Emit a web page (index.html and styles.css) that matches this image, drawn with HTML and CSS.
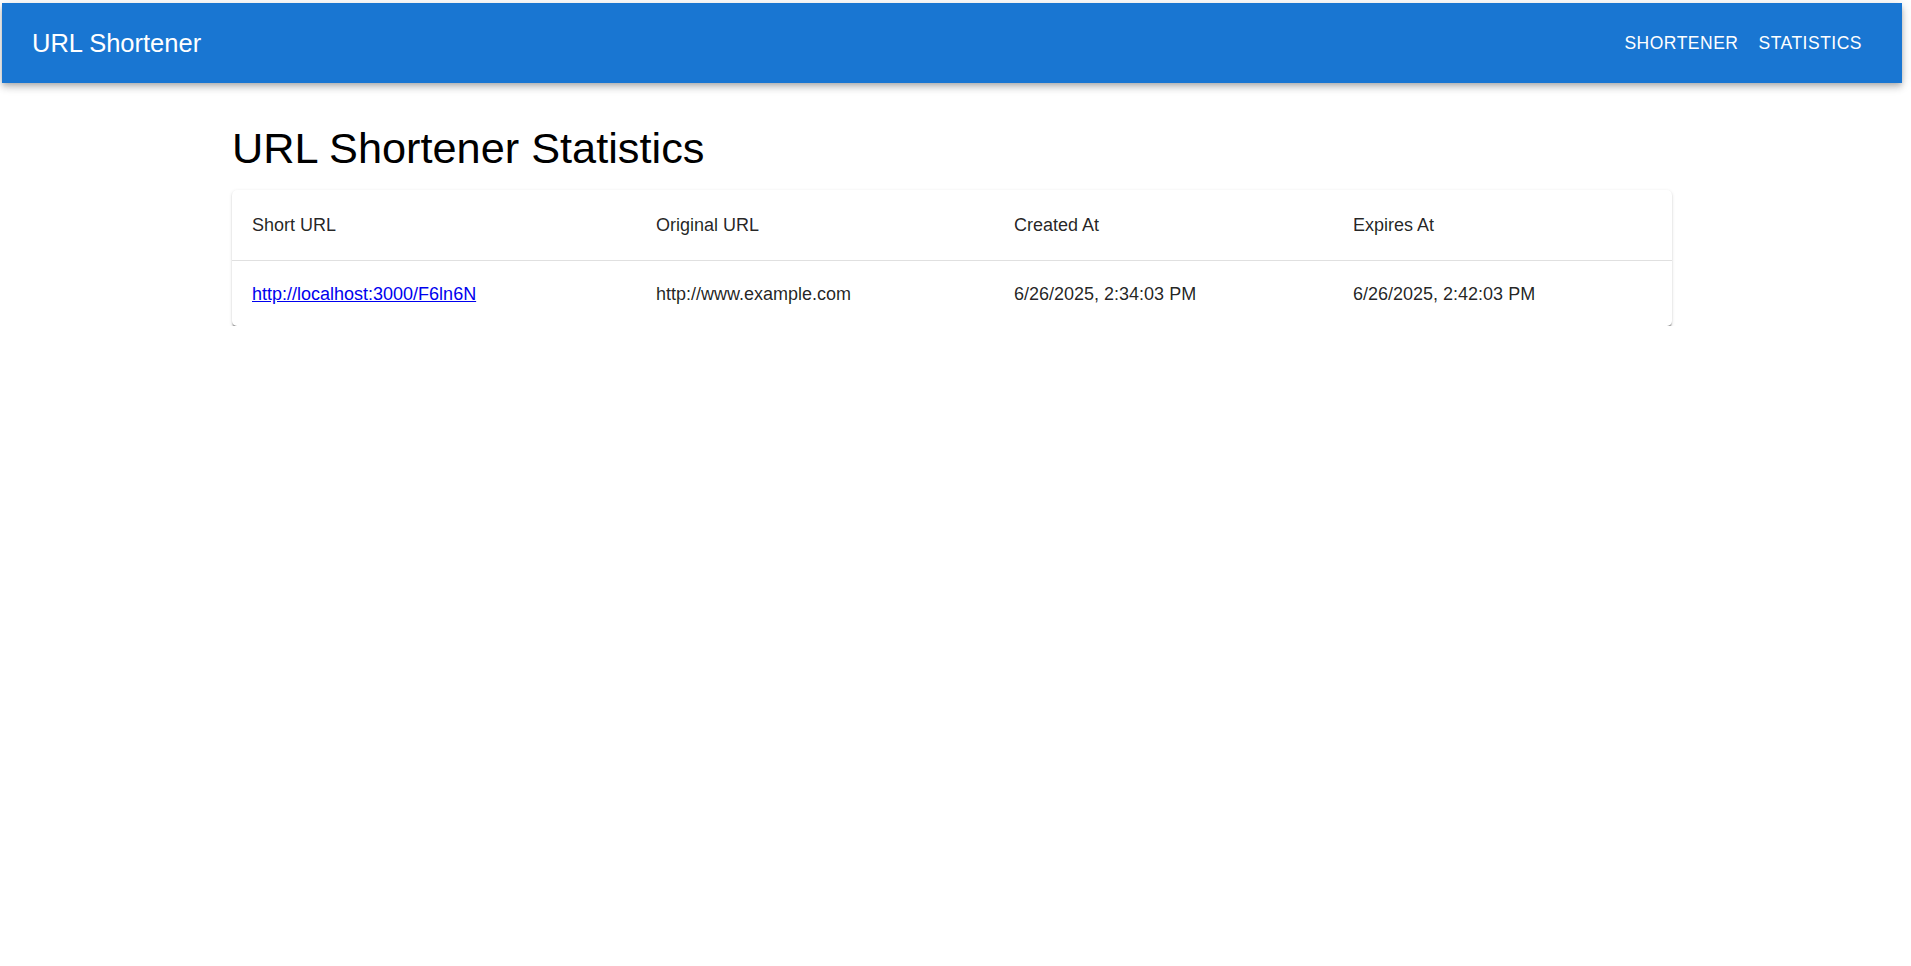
FILE: index.html
```html
<!DOCTYPE html>
<html lang="en">
<head>
<meta charset="utf-8">
<title>URL Shortener</title>
<link rel="stylesheet" href="styles.css">
</head>
<body>
<div class="page">
  <header class="appbar">
    <div class="brand">URL Shortener</div>
    <nav class="nav">
      <a class="nav-btn" href="#">Shortener</a>
      <a class="nav-btn" href="#">Statistics</a>
    </nav>
  </header>
  <main class="container">
    <h1 class="title">URL Shortener Statistics</h1>
    <div class="card">
      <table class="stats">
        <thead>
          <tr>
            <th class="c1">Short URL</th>
            <th class="c2">Original URL</th>
            <th class="c3">Created At</th>
            <th class="c4">Expires At</th>
          </tr>
        </thead>
        <tbody>
          <tr>
            <td><a class="short-link" href="#">http://localhost:3000/F6ln6N</a></td>
            <td>http://www.example.com</td>
            <td>6/26/2025, 2:34:03 PM</td>
            <td>6/26/2025, 2:42:03 PM</td>
          </tr>
        </tbody>
      </table>
    </div>
  </main>
</div>
</body>
</html>
```
FILE: styles.css
```css
html, body {
  margin: 0;
  padding: 0;
  background: #ffffff;
}
body {
  font-family: "Liberation Sans", Arial, sans-serif;
  color: rgba(0, 0, 0, 0.87);
}
.page {
  width: 1900px;
  padding: 3px 0 0 2px;
}
.appbar {
  height: 80px;
  box-sizing: border-box;
  padding: 0 30px;
  background: #1976d2;
  color: #ffffff;
  display: flex;
  align-items: center;
  justify-content: space-between;
  box-shadow: 0 2.5px 5px -1.25px rgba(0, 0, 0, 0.2),
              0 5px 6.25px 0 rgba(0, 0, 0, 0.14),
              0 1.25px 12.5px 0 rgba(0, 0, 0, 0.12);
  position: relative;
  z-index: 1;
}
.brand {
  font-size: 25.5px;
  line-height: 40px;
  font-weight: 400;
}
.nav {
  display: flex;
}
.nav-btn {
  color: #ffffff;
  text-decoration: none;
  text-transform: uppercase;
  font-size: 17.5px;
  line-height: 1.75;
  letter-spacing: 0.5px;
  padding: 7.5px 10px;
}
.container {
  width: 1440px;
  margin: 0 auto;
  padding-top: 39px;
}
.title {
  margin: 0 0 15px;
  font-size: 43.3px;
  line-height: 53px;
  font-weight: 400;
  color: #000000;
}
.card {
  background: #ffffff;
  border-radius: 5px;
  overflow: hidden;
  box-shadow: 0 2.5px 1.25px -1.25px rgba(0, 0, 0, 0.25),
              0 1.25px 1.25px 0 rgba(0, 0, 0, 0.16),
              0 1.25px 3.75px 0 rgba(0, 0, 0, 0.12);
}
.stats {
  width: 100%;
  border-collapse: collapse;
  table-layout: fixed;
  font-size: 18px;
}
.stats th,
.stats td {
  box-sizing: border-box;
  text-align: left;
  padding: 20px;
  color: rgba(0, 0, 0, 0.87);
  font-weight: 400;
}
.stats th {
  line-height: 30px;
  border-bottom: 1px solid #e0e0e0;
}
.stats td {
  line-height: 25px;
  padding-top: 21px;
  padding-bottom: 19px;
}
.c1 { width: 404px; }
.c2 { width: 358px; }
.c3 { width: 339px; }
.c4 { width: 339px; }
.short-link {
  color: #0000ee;
  text-decoration: underline;
}
```
